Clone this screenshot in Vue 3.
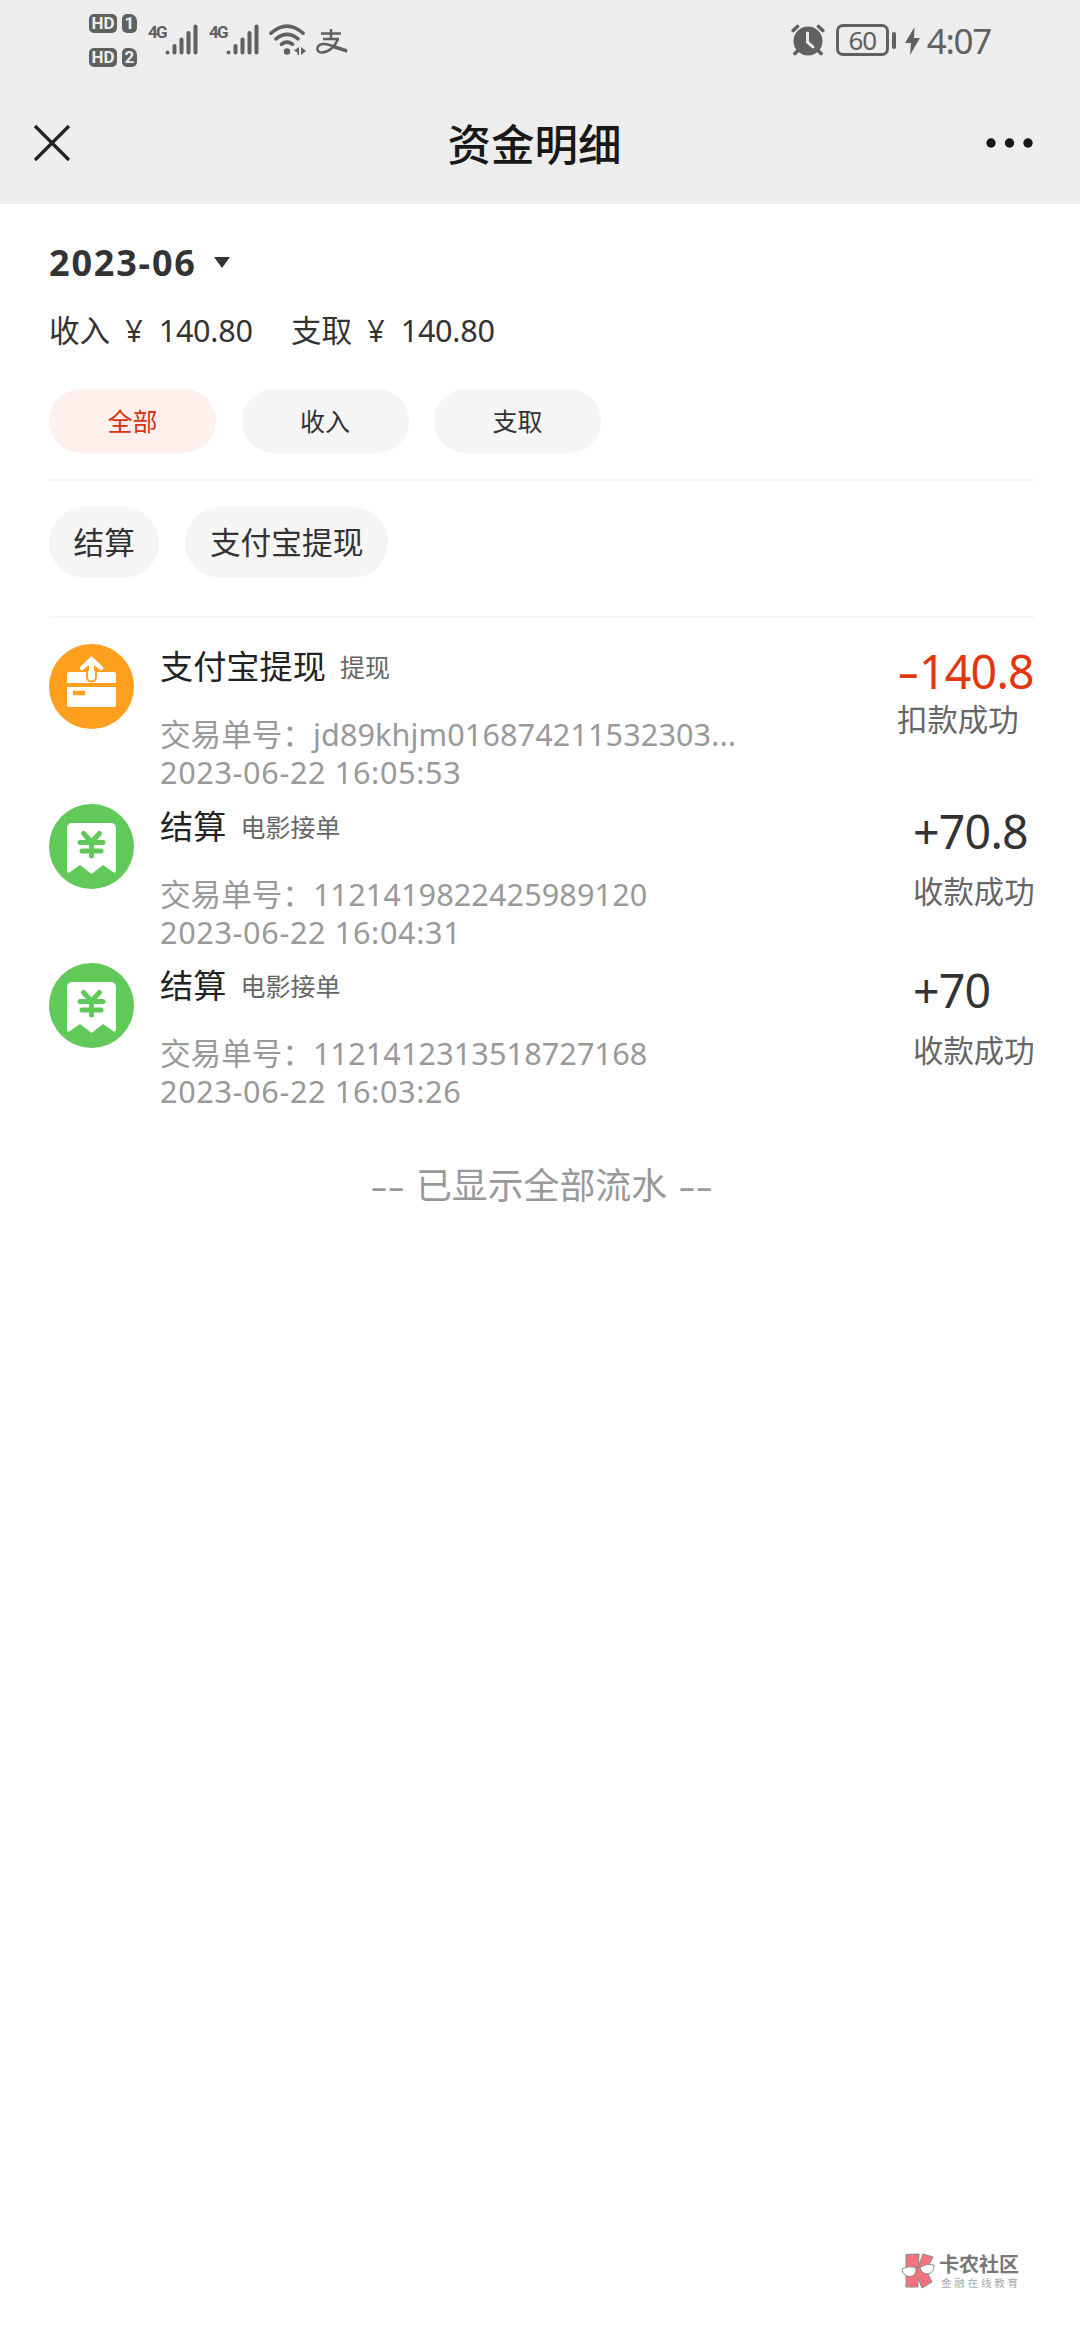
<template>
  <div class="page">
    <header class="header">
      <div class="status-bar">
        <div class="status-left">
          <div class="hd-list">
            <div v-for="n in 2" :key="n" class="hd-row">
              <span class="hd">HD</span>
              <span class="sim">{{ n }}</span>
            </div>
          </div>
          <div v-for="n in 2" :key="n" class="signal">
            <span class="net">4G</span>
            <svg width="33" height="31" viewBox="0 0 33 31" stroke="#606060" stroke-width="4" stroke-linecap="round">
              <path d="M2.5 28.5v.1M9.5 22v6.5M16.5 15.500v13M23.500 9v19.500M30.500 2.500v26" />
            </svg>
          </div>
          <svg class="wifi" width="38" height="32" viewBox="0 0 38 32" fill="none" stroke="#606060" stroke-width="3.6" stroke-linecap="round">
            <path d="M2 9.200Q18 -4.800 34 9.200M7 14.800Q18 5.800 29 14.800M12.500 20.200Q18 16.200 23.500 20.200" />
            <circle cx="18" cy="27.500" r="3.200" fill="#606060" stroke="none" />
            <path d="M30 23v8h-1.600v-2.500L25 26.500zM32 23l5 4-5 4z" fill="#606060" stroke="none" />
          </svg>
          <svg class="alipay" width="32" height="26" viewBox="0 0 32 26" fill="none" stroke="#606060">
            <path d="M5 4.500h20M15 0v10M7 10h16" stroke-width="2.500" />
            <path d="M22 10C19 18 12 23.500 6 23.500C-.5 23.500 0 16 6.500 15C13 14.300 22 19 31 22.500" stroke-width="2.500" />
            <path d="M17 17.500L31 21.800" stroke-width="3.500" />
          </svg>
        </div>
        <div class="status-right">
          <svg width="34" height="32" viewBox="0 0 34 32" fill="none" stroke="#606060" stroke-linecap="round">
            <circle cx="17" cy="17" r="14.500" fill="#606060" stroke="none" />
            <path d="M2.200 6.500L6.500 2.500M31.800 6.500L27.500 2.500M6.500 27L4 29.500M27.500 27L30 29.500" stroke-width="3.600" />
            <path d="M16.500 9v9l5.500 5" stroke="#ededed" stroke-width="3" />
          </svg>
          <div class="battery">60</div>
          <div class="battery-tip"></div>
          <svg class="bolt" width="15" height="28" viewBox="0 0 15 28">
            <path d="M9.500 0L0 16h6L5 28 15 11H9z" fill="#606060" />
          </svg>
          <span class="clock">4:07</span>
        </div>
      </div>
      <div class="nav">
        <svg width="38" height="38" viewBox="0 0 38 38" fill="none" stroke="#222" stroke-width="3.200">
          <path d="M2 2l34 34M36 2L2 36" />
        </svg>
        <h1>资金明细</h1>
        <svg width="48" height="10" viewBox="0 0 48 10" fill="#181818">
          <circle cx="5" cy="5" r="4.700" />
          <circle cx="23.500" cy="5" r="4.700" />
          <circle cx="42" cy="5" r="4.700" />
        </svg>
      </div>
    </header>

    <main class="content">
      <div class="month">
        <span>{{ month }}</span>
        <i class="arrow"></i>
      </div>
      <div class="summary">
        <div v-for="s in summary" :key="s.label" class="summary-item">
          <span>{{ s.label }}</span>
          <span class="yen">¥</span>
          <span class="sum">{{ s.value }}</span>
        </div>
      </div>

      <div class="tabs">
        <button
          v-for="tab in tabs"
          :key="tab"
          type="button"
          :class="{ active: tab === activeTab }"
          @click="activeTab = tab"
        >{{ tab }}</button>
      </div>
      <div class="chips">
        <span v-for="chip in chips" :key="chip" class="chip">{{ chip }}</span>
      </div>

      <ul class="list">
        <li v-for="item in shownItems" :key="item.no" class="item">
          <svg v-if="item.type === 'out'" class="icon" viewBox="0 0 85 85">
            <circle cx="42.500" cy="42.500" r="42.500" fill="#ff9f1e" />
            <path d="M20 28h45a2 2 0 0 1 2 2v9H18v-9a2 2 0 0 1 2-2zM18 43h49v18a2 2 0 0 1-2 2H20a2 2 0 0 1-2-2z" fill="#fff" />
            <path d="M38 27v6a4.500 4.500 0 0 0 9 0v-6" fill="#fff" stroke="#ff9f1e" stroke-width="2" />
            <path d="M42.500 12L31.500 22.500a2 2 0 0 0 2.500 3.200L40 21v12a2.500 2.500 0 0 0 5 0V21l6 4.700a2 2 0 0 0 2.500-3.200z" fill="#fff" />
            <path d="M24 49h12" stroke="#ff9f1e" stroke-width="4.500" />
          </svg>
          <svg v-else class="icon" viewBox="0 0 85 85">
            <circle cx="42.500" cy="42.500" r="42.500" fill="#61c85a" />
            <path d="M23 19h39a5 5 0 0 1 5 5v42q0 4-3 2L54 61 42.500 70 31 61 21 68q-3 2-3-2V24a5 5 0 0 1 5-5z" fill="#fff" />
            <path d="M34.500 29.500l8 8.500 8-8.500M31 38.500h23M33 47h19M42.500 38v14" fill="none" stroke="#61c85a" stroke-width="5" stroke-linecap="round" />
          </svg>
          <div class="info">
            <div class="title">
              <strong>{{ item.title }}</strong>
              <small>{{ item.sub }}</small>
            </div>
            <div class="meta">交易单号：<span class="no">{{ item.no }}</span></div>
            <div class="meta time">{{ item.time }}</div>
          </div>
          <div class="result" :class="item.type">
            <div class="amount"><span class="sign">{{ item.sign }}</span>{{ item.amount }}</div>
            <div class="state">{{ item.state }}</div>
          </div>
        </li>
      </ul>
      <p class="end"><span class="dash">--</span><span>已显示全部流水</span><span class="dash">--</span></p>
    </main>

    <footer class="brand">
      <svg width="34" height="36" viewBox="0 0 34 36" stroke="#888" stroke-width="1">
        <path d="M5 1.500L18 1l-.5 12L22 1l10 3-7 13 6 12-10 6-4-10v9L5 34z" fill="#f2727f" />
        <path d="M1 16q7-4 14-1 .5 8-6 8.500-7 0-8-7.500zM19 14q7-4 14-2 0 8-6 9-7 0-8-7z" fill="#fff" />
        <path d="M15 15l4-1" fill="none" />
      </svg>
      <div class="brand-text">
        <b>卡农社区</b>
        <span>金融在线教育</span>
      </div>
    </footer>
  </div>
</template>

<script setup>
import { ref, computed } from 'vue';

const month = ref('2023-06');
const summary = [
  { label: '收入', value: '140.80' },
  { label: '支取', value: '140.80' }
];

const tabs = ['全部', '收入', '支取'];
const activeTab = ref('全部');
const chips = ['结算', '支付宝提现'];

const items = ref([
  {
    type: 'out',
    title: '支付宝提现',
    sub: '提现',
    no: 'jd89khjm016874211532303...',
    time: '2023-06-22 16:05:53',
    sign: '-',
    amount: '140.8',
    state: '扣款成功'
  },
  {
    type: 'in',
    title: '结算',
    sub: '电影接单',
    no: '1121419822425989120',
    time: '2023-06-22 16:04:31',
    sign: '+',
    amount: '70.8',
    state: '收款成功'
  },
  {
    type: 'in',
    title: '结算',
    sub: '电影接单',
    no: '1121412313518727168',
    time: '2023-06-22 16:03:26',
    sign: '+',
    amount: '70',
    state: '收款成功'
  }
]);

const shownItems = computed(() => {
  if (activeTab.value === '收入') return items.value.filter((i) => i.type === 'in');
  if (activeTab.value === '支取') return items.value.filter((i) => i.type === 'out');
  return items.value;
});
</script>

<style>
body {
  margin: 0;
  background: #fff;
}
</style>

<style scoped>
.page {
  display: flex;
  flex-direction: column;
  width: 1080px;
  height: 2340px;
  overflow: hidden;
  background: #fff;
  color: #333;
  font-family: "Noto Sans", "Noto Sans CJK SC", sans-serif;
  white-space: nowrap;
}

.page svg {
  display: block;
  flex: none;
}

.header {
  height: 204px;
  background: #ededed;
}

/* status bar */
.status-bar {
  display: flex;
  justify-content: space-between;
  height: 82px;
  padding: 0 89px;
  box-sizing: border-box;
  color: #606060;
}

.status-left,
.status-right {
  display: flex;
  align-items: flex-start;
}

.hd-list {
  display: flex;
  flex-direction: column;
  gap: 15px;
  padding-top: 14px;
  margin-right: 11px;
}

.hd-row {
  display: flex;
  gap: 5px;
}

.hd,
.sim {
  height: 19px;
  border-radius: 5px;
  background: #606060;
  color: #ededed;
  font: bold 17px/19px Roboto, sans-serif;
  text-align: center;
}

.hd {
  width: 28px;
}

.sim {
  width: 15px;
  border-top-right-radius: 7px;
}

.signal {
  display: flex;
  width: 61px;
  padding-top: 24px;
}

.net {
  width: 17px;
  font: bold 17px/16px Roboto, sans-serif;
  letter-spacing: -1.8px;
}

.wifi {
  margin-top: 24px;
  margin-left: -1px;
}

.alipay {
  margin-top: 29px;
  margin-left: 9px;
}

.status-right > svg:first-child {
  margin-top: 24px;
}

.battery {
  width: 53px;
  height: 32px;
  margin: 24px 0 0 11px;
  box-sizing: border-box;
  border: 3px solid #606060;
  border-radius: 7px;
  font-size: 26px;
  line-height: 26px;
  letter-spacing: -1px;
  text-align: center;
}

.battery-tip {
  width: 4px;
  height: 17px;
  margin: 32px 9px 0 3px;
  border-radius: 2px;
  background: #606060;
}

.bolt {
  margin-top: 27px;
}

.clock {
  margin: 21px 0 0 7px;
  font-size: 35px;
  line-height: 40px;
  letter-spacing: -1.3px;
}

/* nav bar */
.nav {
  display: flex;
  align-items: center;
  justify-content: space-between;
  height: 122px;
  padding: 0 46px 0 33px;
}

.nav h1 {
  margin: 2px 0 0 12px;
  color: #181818;
  font-size: 43.5px;
  font-weight: 500;
  line-height: 60px;
}

.content {
  padding: 36px 46px 0 49px;
}

.month {
  display: flex;
  align-items: center;
  height: 46px;
  font-size: 36px;
  font-weight: bold;
  line-height: 46px;
  letter-spacing: 1.8px;
}

.arrow {
  margin: 0 0 1px 17px;
  border: 8px solid transparent;
  border-top: 11px solid #333;
  border-bottom: 0;
}

.summary {
  display: flex;
  gap: 38px;
  margin-top: 24px;
  font-size: 30.6px;
  line-height: 40px;
}

.summary-item {
  display: flex;
  width: 204px;
}

.yen {
  margin-left: 15px;
}

.sum {
  margin-left: 16px;
  letter-spacing: -0.3px;
}

.tabs {
  display: flex;
  gap: 25.5px;
  margin-top: 39px;
  padding-bottom: 26px;
  border-bottom: 2px solid #f5f5f5;
}

.tabs button {
  width: 167px;
  height: 64px;
  padding: 0;
  border: 0;
  border-radius: 32px;
  background: #f5f5f5;
  color: #333;
  font-family: inherit;
  font-size: 25px;
  line-height: 64px;
}

.tabs button.active {
  background: #fff0ed;
  color: #d9300f;
}

.chips {
  display: flex;
  gap: 26px;
  padding: 26px 0 38px;
  border-bottom: 2px solid #f5f5f5;
}

.chip {
  height: 71px;
  padding: 0 24.5px;
  border-radius: 36px;
  background: #f5f5f5;
  font-size: 30.7px;
  line-height: 71px;
}

/* transactions */
.list {
  margin: 0;
  padding: 26px 0 0;
  list-style: none;
}

.item {
  display: flex;
  height: 159.5px;
}

.icon {
  width: 85px;
  height: 85px;
}

.info {
  flex: 1;
  margin-left: 26px;
}

.title {
  display: flex;
  align-items: center;
  gap: 14px;
  height: 46px;
  line-height: 46px;
}

.title strong {
  color: #222;
  font-size: 33.2px;
  font-weight: 400;
}

.title small {
  color: #666;
  font-size: 25px;
}

.meta {
  margin-top: 25px;
  color: #999;
  font-size: 30.6px;
  line-height: 38px;
}

.no {
  letter-spacing: 0.1px;
}

.time {
  margin-top: 0;
  letter-spacing: 0.65px;
}

.result.in {
  width: 121px;
}

.result.out {
  width: 137px;
}

.amount {
  display: flex;
  color: #333;
  font-size: 46.5px;
  line-height: 54px;
  letter-spacing: -0.8px;
}

.out .amount {
  color: #e2360f;
}

/* the minus is drawn as wide as a digit */
.out .sign {
  width: 22px;
  transform: scaleX(1.5);
  transform-origin: 0 50%;
}

.state {
  margin-top: 14px;
  color: #666;
  font-size: 30.4px;
  line-height: 40px;
}

.out .state {
  margin-top: 2px;
}

.end {
  display: flex;
  justify-content: center;
  gap: 13px;
  margin: 38px 0 0;
  color: #999;
  font-size: 35.9px;
  line-height: 50px;
}

.dash {
  transform: scaleX(1.5);
  margin: 0 4px;
}

.brand {
  display: flex;
  gap: 4px;
  margin-top: auto;
  padding: 0 0 51px 901px;
}

.brand-text {
  display: flex;
  flex-direction: column;
}

.brand-text b {
  color: #777;
  font-size: 20px;
  line-height: 24px;
}

.brand-text span {
  margin-left: 2px;
  color: #aaa;
  font-size: 10.5px;
  line-height: 12px;
  letter-spacing: 2.8px;
}
</style>
